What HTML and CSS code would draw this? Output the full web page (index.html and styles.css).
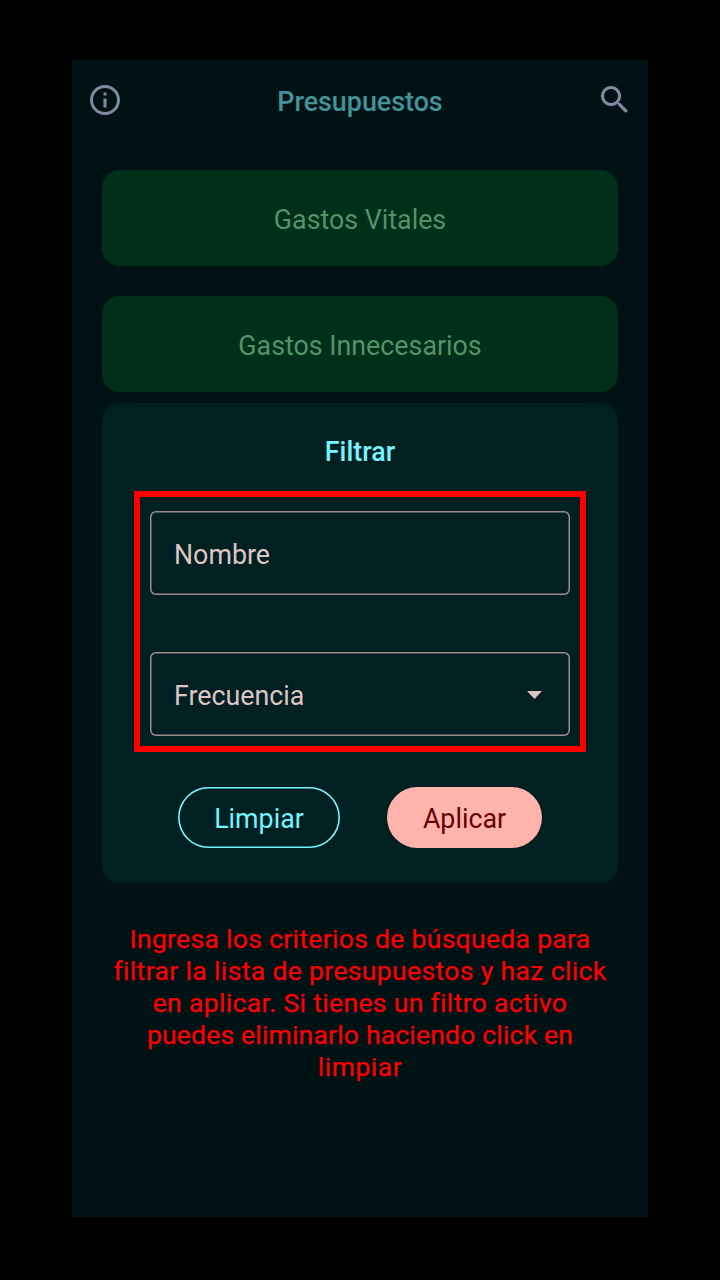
FILE: index.html
```html
<!DOCTYPE html>
<html lang="es">
<head>
<meta charset="utf-8">
<title>Presupuestos</title>
<link rel="stylesheet" href="styles.css">
</head>
<body>
<main class="phone">
  <header class="topbar">
    <svg class="info-icon" viewBox="2 2 20 20"><path d="M11 7h2v2h-2zm0 4h2v6h-2zm1-9C6.480 2 2 6.480 2 12s4.480 10 10 10 10-4.480 10-10S17.520 2 12 2zm0 18c-4.410 0-8-3.590-8-8s3.590-8 8-8 8 3.590 8 8-3.590 8-8 8z"/></svg>
    <h1 class="title">Presupuestos</h1>
    <svg class="search-icon" viewBox="3 3 17.490 17.490"><path d="M15.500 14h-.79l-.28-.27C15.410 12.590 16 11.110 16 9.500 16 5.910 13.090 3 9.500 3S3 5.910 3 9.500 5.910 16 9.500 16c1.610 0 3.090-.59 4.230-1.570l.27.28v.79l5 4.990L20.490 19l-4.990-5zm-6 0C7.010 14 5 11.990 5 9.500S7.010 5 9.500 5 14 7.010 14 9.500 11.990 14 9.500 14z"/></svg>
  </header>
  <div class="budgets">
    <div class="budget">Gastos Vitales</div>
    <div class="budget">Gastos Innecesarios</div>
  </div>
  <section class="filter">
    <h2 class="filter-title">Filtrar</h2>
    <div class="criteria">
      <div class="field">Nombre</div>
      <div class="field">Frecuencia<svg class="caret" viewBox="0 0 15 8"><path d="M0 0h15L7.500 8z"/></svg></div>
    </div>
    <div class="actions">
      <button class="button clear">Limpiar</button>
      <button class="button apply">Aplicar</button>
    </div>
  </section>
  <p class="help">
    <span class="line line-1">Ingresa los criterios de búsqueda para</span>
    <span class="line line-2">filtrar la lista de presupuestos y haz click</span>
    <span class="line line-3">en aplicar. Si tienes un filtro activo</span>
    <span class="line line-4">puedes eliminarlo haciendo click en</span>
    <span class="line line-5">limpiar</span>
  </p>
</main>
</body>
</html>
```
FILE: styles.css
```css
* { box-sizing: border-box; }
body {
  margin: 0;
  height: 1280px;
  padding: 60px 72px 63px;
  background: #000;
  font-family: Roboto, sans-serif;
  font-size: 26.800px;
  line-height: 32px;
}
.phone {
  height: 1157px;
  background: #001214;
  display: flex;
  flex-direction: column;
}
.topbar {
  height: 110.400px;
  padding: 25px 20px 0 18px;
  display: flex;
  justify-content: space-between;
  align-items: flex-start;
}
.info-icon { width: 30px; height: 30px; fill: #7c8da3; }
.search-icon { width: 27px; height: 27px; margin-top: 1px; fill: #7c8da3; }
.title {
  margin: 1px 0 0 -1px;
  font-size: 26.850px;
  font-weight: 500;
  color: #43939a;
}
.budgets {
  padding: 0 30px;
  display: grid;
  gap: 30px;
}
.budget {
  height: 96px;
  padding-top: 4px;
  border-radius: 18px;
  background: #002f1a;
  color: #559367;
  display: flex;
  align-items: center;
  justify-content: center;
}
.filter {
  height: 480px;
  margin: 10.600px 30px 0;
  padding: 33px 32px 0;
  border-radius: 18px;
  background: #002021;
}
.filter-title {
  margin: 0 0 23px;
  text-align: center;
  font-size: 26.850px;
  font-weight: 500;
  color: #74f5ff;
}
.criteria {
  height: 261px;
  padding: 14px 10px 0;
  border: 6px solid #f00;
  display: flex;
  flex-direction: column;
  gap: 57px;
}
.field {
  height: 84px;
  padding: 4px 28px 0 24px;
  box-shadow: inset 0 0 0 1.500px #a08c8a;
  border-radius: 6px;
  color: #dec5c3;
  display: flex;
  align-items: center;
  justify-content: space-between;
}
.caret { width: 15px; height: 8px; margin-top: -2px; fill: #dec5c3; }
.actions {
  margin-top: 35px;
  padding-left: 44px;
  display: flex;
  gap: 47px;
}
.button {
  height: 61px;
  padding: 3px 0 0;
  border: 0;
  border-radius: 31px;
  font: inherit;
}
.clear {
  width: 162px;
  box-shadow: inset 0 0 0 1.600px #74f5ff;
  background: transparent;
  color: #74f5ff;
}
.apply {
  width: 155px;
  background: #ffb4ab;
  color: #690005;
}
.help {
  margin: 40px 0 0;
  color: #f00;
  text-align: center;
  font-size: 26.500px;
  -webkit-text-stroke: 0.250px #f00;
}
.line { display: block; white-space: nowrap; }
.line-1 { letter-spacing: 0.310px; }
.line-2 { letter-spacing: 0.360px; }
.line-3 { letter-spacing: 0.340px; }
.line-4 { letter-spacing: 0.190px; }
.line-5 { letter-spacing: 0.500px; }
```
